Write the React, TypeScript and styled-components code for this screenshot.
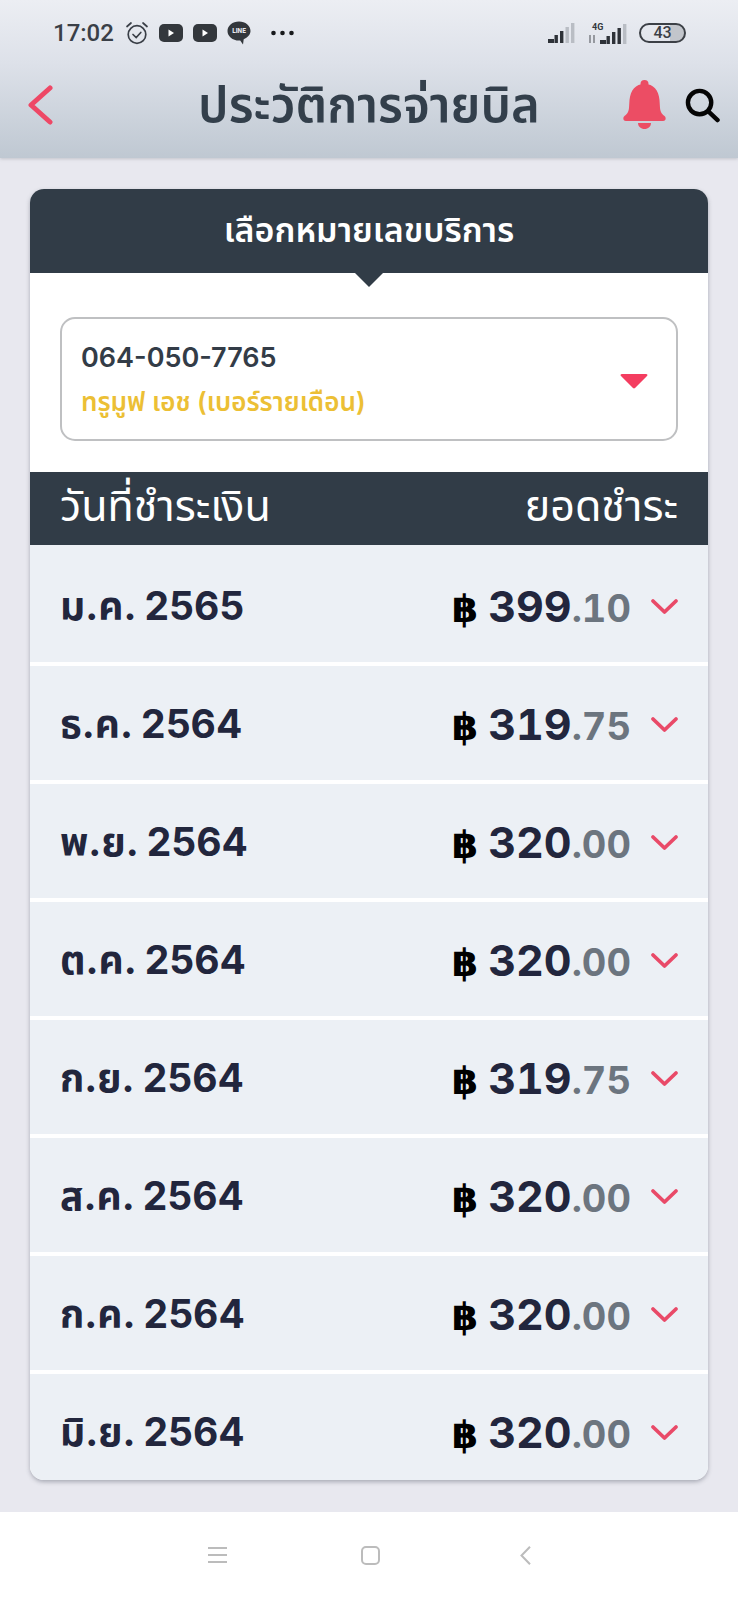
import React from "react";
import styled, { createGlobalStyle } from "styled-components";

const FONT = `Inter, "Noto Sans Thai", "Noto Sans Thai UI", "Noto Sans", "Open Sans", "DejaVu Sans", sans-serif`;

const Global = createGlobalStyle`
  html, body { margin: 0; padding: 0; }
  body { background: #e8e8ef; font-family: ${FONT}; }
`;

const Page = styled.div`
  width: 738px;
  height: 1600px;
  display: flex;
  flex-direction: column;
  overflow: hidden;
  background: #e8e8ef;
`;

const Top = styled.header`
  height: 158px;
  flex: none;
  display: flex;
  flex-direction: column;
  background: linear-gradient(180deg, #eceef3 0%, #dde1e9 40%, #bfc8d2 100%);
  box-shadow: 0 1px 3px rgba(120, 125, 135, 0.35);
`;

const StatusBar = styled.div`
  height: 66px;
  flex: none;
  display: flex;
  align-items: center;
  padding: 0 52px 0 53px;
`;

const Clock = styled.span`
  font: 500 24px Roboto, sans-serif;
  color: #3a3f47;
  margin-right: 11px;
`;

const StatusIcons = styled.div`
  display: flex;
  align-items: center;
  gap: 10px;
`;

const DotsSlot = styled.span`
  display: flex;
  margin-left: 10px;
`;

const Spacer = styled.div`
  flex: 1;
`;

const StatusRight = styled.div`
  display: flex;
  align-items: center;
  gap: 12px;
`;

const Battery = styled.div`
  width: 47px;
  height: 20px;
  box-sizing: border-box;
  border: 2px solid #3c4046;
  border-radius: 10px;
  font: 500 16px/16px Roboto, sans-serif;
  color: #3c4046;
  text-align: center;
  background: linear-gradient(90deg, transparent 68%, #c2c5cb 68%);
`;

const NavBar = styled.div`
  flex: 1;
  display: grid;
  grid-template-columns: 1fr auto 1fr;
  align-items: center;
  padding: 0 18px 14px;
`;

const BackSlot = styled.div`
  display: flex;
  margin-left: 9px;
`;

const Title = styled.h1`
  margin: 0;
  text-align: center;
  font: 600 49px/1.2 ${FONT};
  color: #333f4b;
  white-space: nowrap;
`;

const NavIcons = styled.div`
  display: flex;
  align-items: center;
  justify-content: flex-end;
  gap: 19px;
`;

const Main = styled.main`
  flex: 1;
  padding: 31px 30px 0;
`;

const Card = styled.section`
  border-radius: 14px;
  overflow: hidden;
  background: #fff;
  box-shadow: 0 2px 4px rgba(90, 95, 110, 0.45);
`;

const CardHead = styled.div`
  position: relative;
  height: 84px;
  box-sizing: border-box;
  padding-bottom: 2px;
  display: flex;
  align-items: center;
  justify-content: center;
  background: #313c47;
  color: #fff;
  font: 600 34px/1 ${FONT};

  &::after {
    content: "";
    position: absolute;
    left: 50%;
    bottom: -14px;
    margin-left: -14px;
    border-left: 14px solid transparent;
    border-right: 14px solid transparent;
    border-top: 14px solid #313c47;
  }
`;

const SelectWrap = styled.div`
  padding: 44px 30px 31px;
`;

const SelectBox = styled.div`
  height: 124px;
  box-sizing: border-box;
  border: 2px solid #bfc0c2;
  border-radius: 15px;
  display: flex;
  align-items: center;
  justify-content: space-between;
  padding: 1px 28px 0 19px;
`;

const SelectText = styled.div`
  display: flex;
  flex-direction: column;
  gap: 11px;
`;

const Phone = styled.div`
  font: 600 27px/1.2 ${FONT};
  color: #333c47;
`;

const Plan = styled.div`
  font: 600 26px/1.2 ${FONT};
  color: #ecbf35;
`;

const CaretSlot = styled.span`
  display: flex;
  margin-top: 2px;
`;

const ColumnHead = styled.div`
  height: 73px;
  box-sizing: border-box;
  padding: 0 30px 6px;
  display: flex;
  align-items: center;
  justify-content: space-between;
  background: #313c47;
  color: #fff;
  font: 400 43px/1 ${FONT};
`;

const Rows = styled.div`
  display: flex;
  flex-direction: column;
  gap: 4px;
`;

const Row = styled.div<{ $height: number; $pad: number }>`
  height: ${(p) => p.$height}px;
  box-sizing: border-box;
  padding: ${(p) => p.$pad}px 29px 0 30px;
  display: flex;
  align-items: flex-start;
  background: #ecf0f5;
`;

const RowDate = styled.div`
  flex: 1;
  font: 700 39px/50px ${FONT};
  color: #22263d;
`;

const Amount = styled.div`
  display: flex;
  align-items: baseline;
  line-height: 50px;
`;

const Baht = styled.span`
  font: 700 38px/50px "DejaVu Sans", sans-serif;
  color: #000;
  margin-right: 10px;
`;

const Whole = styled.span`
  font: 700 43px/50px ${FONT};
  font-variant-numeric: tabular-nums;
  color: #22263d;
`;

const Cents = styled.span`
  font: 700 38px/50px ${FONT};
  font-variant-numeric: tabular-nums;
  color: #6c757f;
`;

const Chevron = styled.span`
  display: flex;
  height: 50px;
  align-items: center;
  margin-left: 19px;
`;

const BottomNav = styled.nav`
  height: 88px;
  box-sizing: border-box;
  padding-bottom: 2px;
  flex: none;
  background: #fff;
  display: flex;
  align-items: center;
  justify-content: center;
  gap: 134px;
`;

const PrevSlot = styled.span`
  display: flex;
  margin-left: 6px;
`;

const Alarm = () => (
  <svg width="24" height="24" viewBox="0 0 24 24" fill="none" stroke="#3a3f47" strokeWidth="1.7" strokeLinecap="round">
    <circle cx="12" cy="13.5" r="8.8" />
    <path d="M8 13.5l3.2 3 4.6-5M2 5.5L6 2M22 5.5L18 2" />
  </svg>
);

const Yt = () => (
  <svg width="24" height="18" viewBox="0 0 24 18">
    <rect width="24" height="18" rx="5" fill="#33373c" />
    <path d="M9.500 5.500l5.500 3.500-5.500 3.500z" fill="#fff" />
  </svg>
);

const Line = () => (
  <svg width="24" height="24" viewBox="0 0 24 24">
    <path d="M12 0.500C5.600.5.500 4.700.500 10s5.100 9.600 11.500 9.600c.4 0 .8 0 1.200-.1L16 23.500l.7-5.200C20.700 16.600 23.500 13.600 23.500 10 23.500 4.700 18.400.5 12 .5z" fill="#33373c" />
    <text x="12" y="12.300" textAnchor="middle" fontSize="6.500" fontWeight="800" fontFamily="Roboto, sans-serif" fill="#e6e8ee">LINE</text>
  </svg>
);

const Dots = () => (
  <svg width="23" height="6" viewBox="0 0 23 6" fill="#17191c">
    <circle cx="2.500" cy="3" r="2.300" />
    <circle cx="11.500" cy="3" r="2.300" />
    <circle cx="20.500" cy="3" r="2.300" />
  </svg>
);

const BarSet = ({ level, left }: { level: number; left: number }) => (
  <>
    {[0, 1, 2, 3, 4].map((i) => (
      <rect
        key={i}
        x={left + (i === 0 ? 0 : 1 + i * 5.500)}
        y={16 - i * 4}
        width={i === 0 ? 6 : 3.400}
        height={i * 4 + 4}
        fill={i < level ? "#2e3238" : "#b9bdc4"}
      />
    ))}
  </>
);

const Signal = () => (
  <svg width="28" height="20" viewBox="0 0 28 20">
    <BarSet level={3} left={0} />
  </svg>
);

const SignalData = () => (
  <svg width="39" height="22" viewBox="0 -2 39 22">
    <text x="4" y="6" fontSize="9" fontWeight="700" fontFamily="Roboto, sans-serif" fill="#33373c">4G</text>
    <path d="M2 11v8M6 11v8" stroke="#6d7076" strokeWidth="1.300" />
    <BarSet level={4} left={12} />
  </svg>
);

const Back = () => (
  <svg width="26" height="40" viewBox="0 0 26 40" fill="none" stroke="#ee4866" strokeWidth="5" strokeLinecap="round" strokeLinejoin="round">
    <path d="M23 3L4 20l19 17" />
  </svg>
);

const Bell = () => (
  <svg width="43" height="50" viewBox="0 0 43 50" fill="#ec4d64">
    <circle cx="21.500" cy="4" r="4" />
    <path d="M21.500 4C12.500 4 7.500 10 6.500 20L6 28C5.500 33 3 35 1.500 36 0 37-.5 41 3 41H40C43.500 41 43 37 41.500 36 40 35 37.500 33 37 28L36.500 20C35.500 10 30.500 4 21.500 4z" />
    <path d="M15 43h13c0 3.500-3 6-6.500 6S15 46.500 15 43z" />
  </svg>
);

const Search = () => (
  <svg width="35" height="35" viewBox="0 0 36 36" fill="none" stroke="#050505" strokeWidth="4.500" strokeLinecap="round">
    <circle cx="15" cy="15" r="12" />
    <path d="M24 24l9.500 9" />
  </svg>
);

const Caret = () => (
  <svg width="28" height="16" viewBox="0 0 28 16">
    <path d="M2 1h24c1.500 0 2 1 1 2L15 15c-.6.6-1.400.6-2 0L1 3C0 2 .5 1 2 1z" fill="#f43d60" />
  </svg>
);

const Down = () => (
  <svg width="29" height="17" viewBox="0 0 29 17" fill="none" stroke="#e94a68" strokeWidth="3.800" strokeLinecap="round" strokeLinejoin="round">
    <path d="M3 3l11.500 11L26 3" />
  </svg>
);

const Menu = () => (
  <svg width="19" height="16" viewBox="0 0 19 16" stroke="#bcbcbc" strokeWidth="2">
    <path d="M0 1h19M0 8h19M0 15h19" />
  </svg>
);

const Home = () => (
  <svg width="19" height="19" viewBox="0 0 19 19" fill="none" stroke="#bcbcbc" strokeWidth="2">
    <rect x="1" y="1" width="17" height="17" rx="4" />
  </svg>
);

const Prev = () => (
  <svg width="11" height="19" viewBox="0 0 11 19" fill="none" stroke="#bcbcbc" strokeWidth="2">
    <path d="M10 .7L1.500 9.500l8.500 8.800" />
  </svg>
);

type Bill = { date: string; whole: string; cents: string };

const bills: Bill[] = [
  { date: "ม.ค. 2565", whole: "399", cents: ".10" },
  { date: "ธ.ค. 2564", whole: "319", cents: ".75" },
  { date: "พ.ย. 2564", whole: "320", cents: ".00" },
  { date: "ต.ค. 2564", whole: "320", cents: ".00" },
  { date: "ก.ย. 2564", whole: "319", cents: ".75" },
  { date: "ส.ค. 2564", whole: "320", cents: ".00" },
  { date: "ก.ค. 2564", whole: "320", cents: ".00" },
  { date: "มิ.ย. 2564", whole: "320", cents: ".00" },
];

export default function App() {
  return (
    <Page>
      <Global />
      <Top>
        <StatusBar>
          <Clock>17:02</Clock>
          <StatusIcons>
            <Alarm />
            <Yt />
            <Yt />
            <Line />
            <DotsSlot>
              <Dots />
            </DotsSlot>
          </StatusIcons>
          <Spacer />
          <StatusRight>
            <Signal />
            <SignalData />
            <Battery>43</Battery>
          </StatusRight>
        </StatusBar>
        <NavBar>
          <BackSlot>
            <Back />
          </BackSlot>
          <Title>ประวัติการจ่ายบิล</Title>
          <NavIcons>
            <Bell />
            <Search />
          </NavIcons>
        </NavBar>
      </Top>
      <Main>
        <Card>
          <CardHead>เลือกหมายเลขบริการ</CardHead>
          <SelectWrap>
            <SelectBox>
              <SelectText>
                <Phone>064-050-7765</Phone>
                <Plan>ทรูมูฟ เอช (เบอร์รายเดือน)</Plan>
              </SelectText>
              <CaretSlot>
                <Caret />
              </CaretSlot>
            </SelectBox>
          </SelectWrap>
          <ColumnHead>
            <span>วันที่ชำระเงิน</span>
            <span>ยอดชำระ</span>
          </ColumnHead>
          <Rows>
            {bills.map((b, i) => (
              <Row key={b.date} $height={i === 0 ? 117 : i === bills.length - 1 ? 106 : 114} $pad={i === 0 ? 36 : 33}>
                <RowDate>{b.date}</RowDate>
                <Amount>
                  <Baht>฿</Baht>
                  <Whole>{b.whole}</Whole>
                  <Cents>{b.cents}</Cents>
                </Amount>
                <Chevron>
                  <Down />
                </Chevron>
              </Row>
            ))}
          </Rows>
        </Card>
      </Main>
      <BottomNav>
        <Menu />
        <Home />
        <PrevSlot>
          <Prev />
        </PrevSlot>
      </BottomNav>
    </Page>
  );
}
